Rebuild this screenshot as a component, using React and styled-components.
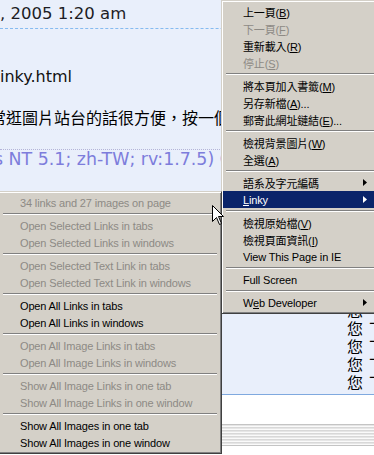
import React from "react";
import styled, { createGlobalStyle } from "styled-components";

const COLORS = {
  page: "#e9effb",
  face: "#d4d0c8",
  shadow: "#808080",
  darkShadow: "#404040",
  highlight: "#0a246a",
  grayText: "#8d8a85",
  ua: "#7d7ddb",
  rule: "#7fa9df",
};

const GlobalStyle = createGlobalStyle`
  html, body { margin: 0; padding: 0; background: #fff; }
`;

const Screen = styled.div`
  position: relative;
  width: 374px;
  height: 455px;
  overflow: hidden;
  background: #fff;
  font-family: "DejaVu Sans", sans-serif;
`;

/* ---------- page underneath the menus ---------- */

const Post = styled.article`
  height: 190px;
  background: ${COLORS.page};
  overflow: hidden;
  white-space: nowrap;
`;

const PostDate = styled.div`
  height: 28px;
  line-height: 28px;
  font-size: 16.5px;
  color: #1c1c24;
  border-bottom: 1px dashed #86bbf0;
`;

const PostLink = styled.div`
  margin-top: 38px;
  line-height: 20px;
  font-size: 16px;
  color: #111;
`;

const PostBody = styled.div`
  margin: 18px 0 0 -10px;
  line-height: 24px;
  font: 16px "Noto Sans CJK TC", sans-serif;
  color: #000;
`;

const UserAgent = styled.div`
  margin-top: 20px;
  border-top: 1px dotted #b4b4d8;
  line-height: 18px;
  font-size: 17.4px;
  color: ${COLORS.ua};
  text-indent: -6px;
`;

const Comments = styled.ul`
  margin: 0;
  padding: 0 0 6px 347px;
  list-style: none;
  background: ${COLORS.page};
  border-bottom: 1px solid ${COLORS.rule};
  overflow: hidden;
  white-space: nowrap;
`;

const CommentRow = styled.li`
  height: 18px;
  line-height: 18px;
  font: 16px "Noto Sans CJK TC", sans-serif;
  letter-spacing: 6px;
  color: #000;
`;

const Footer = styled.div`
  margin-top: 29px;
  height: 20px;
  border-top: 1px solid #c4c4c4;
  border-bottom: 1px solid #c4c4c4;
  background: repeating-linear-gradient(
    to bottom,
    #e6e6e6 0 1px,
    #fafafa 1px 2px,
    #d8d8d8 2px 3px
  );
`;

/* ---------- context menus ---------- */

const Menu = styled.ul`
  position: absolute;
  z-index: ${({ $z }) => $z};
  left: ${({ $left }) => $left}px;
  top: ${({ $top }) => $top}px;
  width: ${({ $width }) => $width}px;
  box-sizing: border-box;
  margin: 0;
  padding: 2px 1px;
  list-style: none;
  background: ${COLORS.face};
  border: 1px solid;
  border-color: ${COLORS.face} ${COLORS.darkShadow} ${COLORS.darkShadow} ${COLORS.face};
  box-shadow: inset 1px 1px #fff, inset -1px -1px ${COLORS.shadow};
`;

const Item = styled.li`
  display: flex;
  align-items: center;
  height: 17px;
  padding: 0 10px 0 20px;
  font: 11px "Liberation Sans", "Noto Sans CJK TC", sans-serif;
  letter-spacing: -0.15px;
  white-space: nowrap;
  color: ${({ $disabled, $active }) =>
    $disabled ? COLORS.grayText : $active ? "#fff" : "#000"};
  background: ${({ $active }) => ($active ? COLORS.highlight : "transparent")};
`;

const Label = styled.span`
  flex: 1;
`;

const Key = styled.span`
  text-decoration: underline;
`;

const Separator = styled.li`
  height: 6px;
  margin: 0 3px;
  display: flex;
  align-items: center;

  &::before {
    content: "";
    flex: 1;
    border-top: 1px solid ${COLORS.shadow};
    border-bottom: 1px solid #fff;
  }
`;

const Cursor = styled.svg`
  position: absolute;
  z-index: 5;
  left: 212px;
  top: 205px;
`;

const mainItems = [
  { pre: "上一頁(", key: "B", post: ")" },
  { pre: "下一頁(", key: "F", post: ")", disabled: true },
  { pre: "重新載入(", key: "R", post: ")" },
  { pre: "停止(", key: "S", post: ")", disabled: true },
  "sep",
  { pre: "將本頁加入書籤(", key: "M", post: ")" },
  { pre: "另存新檔(", key: "A", post: ")..." },
  { pre: "郵寄此網址鏈結(", key: "E", post: ")..." },
  "sep",
  { pre: "檢視背景圖片(", key: "W", post: ")" },
  { pre: "全選(", key: "A", post: ")" },
  "sep",
  { pre: "語系及字元編碼", sub: true },
  { pre: "", key: "L", post: "inky", sub: true, active: true },
  "sep",
  { pre: "檢視原始檔(", key: "V", post: ")" },
  { pre: "檢視頁面資訊(", key: "I", post: ")" },
  { pre: "View This Page in IE" },
  "sep",
  { pre: "Full Screen" },
  "sep",
  { pre: "W", key: "e", post: "b Developer", sub: true },
];

const linkyItems = [
  { pre: "34 links and 27 images on page", disabled: true },
  "sep",
  { pre: "Open Selected Links in tabs", disabled: true },
  { pre: "Open Selected Links in windows", disabled: true },
  "sep",
  { pre: "Open Selected Text Link in tabs", disabled: true },
  { pre: "Open Selected Text Link in windows", disabled: true },
  "sep",
  { pre: "Open All Links in tabs" },
  { pre: "Open All Links in windows" },
  "sep",
  { pre: "Open All Image Links in tabs", disabled: true },
  { pre: "Open All Image Links in windows", disabled: true },
  "sep",
  { pre: "Show All Image Links in one tab", disabled: true },
  { pre: "Show All Image Links in one window", disabled: true },
  "sep",
  { pre: "Show All Images in one tab" },
  { pre: "Show All Images in one window" },
];

const Arrow = ({ color }) => (
  <svg width="4" height="7" viewBox="0 0 4 7">
    <path d="M0 0 L4 3.5 L0 7 Z" fill={color} />
  </svg>
);

const MenuList = ({ items, ...rest }) => (
  <Menu {...rest}>
    {items.map((item, i) =>
      item === "sep" ? (
        <Separator key={i} />
      ) : (
        <Item key={i} $disabled={item.disabled} $active={item.active}>
          <Label>
            {item.pre}
            {item.key && <Key>{item.key}</Key>}
            {item.post}
          </Label>
          {item.sub && <Arrow color={item.active ? "#fff" : "#000"} />}
        </Item>
      )
    )}
  </Menu>
);

export default function App() {
  return (
    <>
      <GlobalStyle />
      <Screen>
        <Post>
          <PostDate>, 2005 1:20 am</PostDate>
          <PostLink>inky.html</PostLink>
          <PostBody>常逛圖片站台的話很方便，按一個</PostBody>
          <UserAgent>s NT 5.1; zh-TW; rv:1.7.5) Gecko/20041107</UserAgent>
        </Post>
        <Comments>
          {Array.from({ length: 11 }, (_, i) => (
            <CommentRow key={i}>您下載</CommentRow>
          ))}
        </Comments>
        <Footer />

        <MenuList items={mainItems} $left={221} $top={0} $width={158} $z={1} />
        <MenuList items={linkyItems} $left={-2} $top={191} $width={224} $z={2} />

        <Cursor width="13" height="21" viewBox="0 0 13 21">
          <path
            d="M0.5 0.5 L0.5 16.5 L4.5 12.5 L7.5 19.5 L9.5 18.5 L6.5 11.5 L11.5 11.5 Z"
            fill="#fff"
            stroke="#000"
            strokeWidth="1"
          />
        </Cursor>
      </Screen>
    </>
  );
}
